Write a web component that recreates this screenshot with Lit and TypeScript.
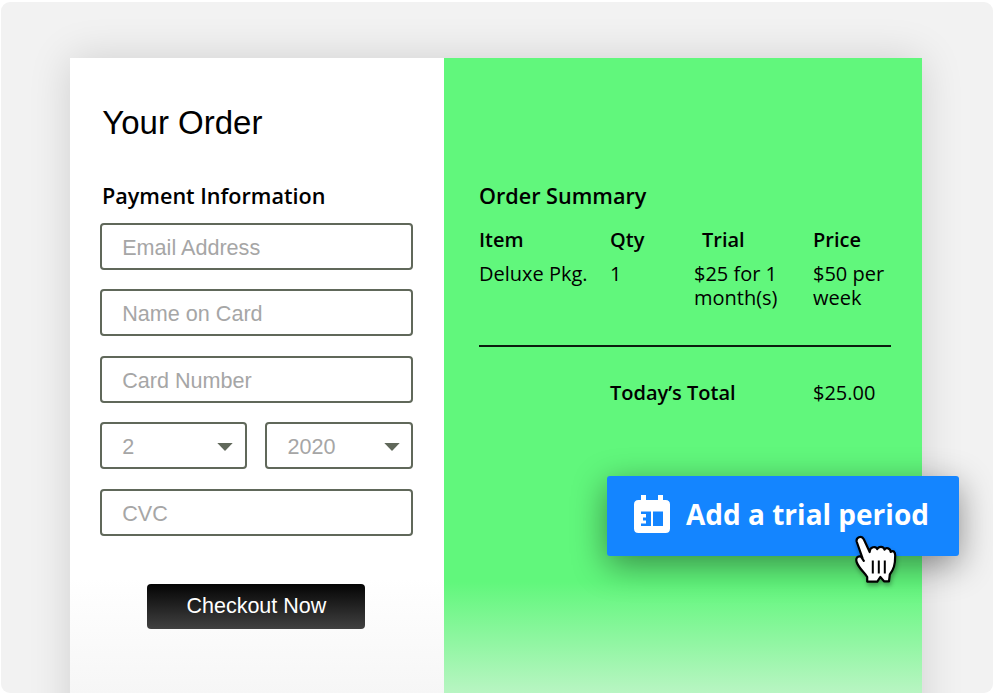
import { LitElement, html, css } from "lit";
import { customElement, property } from "lit/decorators.js";

@customElement("order-field")
class OrderField extends LitElement {
  @property() label = "";
  @property({ type: Boolean }) select = false;

  static styles = css`
    :host {
      display: flex;
      align-items: center;
      justify-content: space-between;
      flex: 1;
      box-sizing: border-box;
      height: 47px;
      padding: 3px 11px 0 20.5px;
      border: 2px solid #60685a;
      border-radius: 4px;
      font: 21.6px/26px "Liberation Sans", Arial, sans-serif;
      color: #a6a6a6;
      background: #fff;
    }
    .arrow {
      display: block;
      width: 16px;
      height: 8px;
      margin-top: -1px;
    }
  `;

  render() {
    return html`<span>${this.label}</span>
      ${this.select
        ? html`<svg class="arrow" viewBox="0 0 16 8"><path d="M0.3 0H15.7L8 8Z" fill="#60685a" /></svg>`
        : null}`;
  }
}

@customElement("app-root")
class AppRoot extends LitElement {
  static styles = css`
    :host {
      display: block;
      width: 994px;
      height: 694px;
      box-sizing: border-box;
      padding: 2px 1px 1px;
      overflow: hidden;
      background: #fff;
      font-family: "Open Sans", "Noto Sans", sans-serif;
      color: #000;
    }
    .stage {
      position: relative;
      height: 691px;
      box-sizing: border-box;
      padding: 56px 71px 0 69px;
      border-radius: 9px;
      background: #f2f2f2;
      overflow: hidden;
    }
    .card {
      display: grid;
      grid-template-columns: 374.4px 1fr;
      height: 700px;
      box-shadow: 0 0 40px rgba(0, 0, 0, 0.14);
    }
    .payment {
      box-sizing: border-box;
      padding: 45px 31.7px 0 29.7px;
      background: linear-gradient(#fff 520px, #f6f6f6 636px);
    }
    .summary {
      box-sizing: border-box;
      padding: 123px 31px 0 34.6px;
      background: linear-gradient(#61f77c 524px, #b9f5c3 636px);
    }
    .title {
      margin: 0 0 0 2.5px;
      font: 400 33px/40px "Liberation Sans", Arial, sans-serif;
    }
    .heading {
      margin: 0;
      font-size: 21.6px;
      line-height: 30px;
      font-weight: 600;
    }
    .payment .heading {
      margin: 38px 0 11.7px 2.3px;
    }
    .fields {
      display: flex;
      flex-direction: column;
      gap: 19.6px;
    }
    .fields order-field {
      flex: none;
    }
    .pair {
      display: flex;
      gap: 18px;
    }
    .fields .pair order-field {
      flex: 1;
    }
    .fields .pair order-field:first-child {
      flex: none;
      width: 147.4px;
      padding-right: 12.5px;
    }
    .checkout {
      display: block;
      width: 218px;
      height: 45px;
      margin: 47.6px 0 0 47.7px;
      padding: 0;
      border: 0;
      border-radius: 4px;
      background: linear-gradient(#040404, #414141);
      color: #fff;
      font: 21.5px/44px "Liberation Sans", Arial, sans-serif;
    }
    .grid {
      display: grid;
      grid-template-columns: 131px 84px 119px 1fr;
      margin-top: 17px;
      font-size: 20px;
      line-height: 24px;
      white-space: nowrap;
    }
    .head {
      font-weight: 600;
      margin-bottom: 10px;
    }
    .indent {
      padding-left: 8px;
    }
    .rule {
      height: 2px;
      margin: 35px 0 34px;
      background: #0b1c0e;
    }
    .total {
      margin-top: 0;
    }
    .name {
      grid-column: 2 / 4;
      font-weight: 600;
    }
    .callout {
      position: absolute;
      left: 606px;
      top: 474px;
      box-sizing: border-box;
      width: 352px;
      height: 80px;
      display: flex;
      align-items: center;
      gap: 16px;
      padding: 0 0 4px 27px;
      border-radius: 3px;
      background: #1485ff;
      box-shadow: 0 9px 34px rgba(0, 0, 0, 0.43);
      color: #fff;
      font-size: 28px;
      line-height: 38px;
      font-weight: 700;
      white-space: nowrap;
    }
    .calendar {
      display: block;
      width: 36px;
      height: 38px;
    }
    .cursor {
      position: absolute;
      left: 853px;
      top: 532px;
      width: 46px;
      height: 52px;
      filter: drop-shadow(1px 3px 2px rgba(0, 0, 0, 0.3));
    }
  `;

  render() {
    return html`
      <div class="stage">
        <div class="card">
          <section class="payment">
            <h1 class="title">Your Order</h1>
            <h2 class="heading">Payment Information</h2>
            <div class="fields">
              <order-field label="Email Address"></order-field>
              <order-field label="Name on Card"></order-field>
              <order-field label="Card Number"></order-field>
              <div class="pair">
                <order-field label="2" select></order-field>
                <order-field label="2020" select></order-field>
              </div>
              <order-field label="CVC"></order-field>
            </div>
            <button class="checkout">Checkout Now</button>
          </section>
          <section class="summary">
            <h2 class="heading">Order Summary</h2>
            <div class="grid">
              <span class="head">Item</span><span class="head">Qty</span>
              <span class="head indent">Trial</span><span class="head">Price</span>
              <span>Deluxe Pkg.</span><span>1</span>
              <span>$25 for 1<br />month(s)</span><span>$50 per<br />week</span>
            </div>
            <div class="rule"></div>
            <div class="grid total">
              <span class="name">Today’s Total</span><span>$25.00</span>
            </div>
          </section>
        </div>
        <div class="callout">
          <svg class="calendar" viewBox="0 0 36 38">
            <path
              fill="#fff"
              fill-rule="evenodd"
              d="M7 0H12V5H24V0H29V5H31.5Q36 5 36 9.500V33.500Q36 38 31.500 38H4.500Q0 38 0 33.500V9.500Q0 5 4.500 5H7ZM7 16.500V19H12V22.500H9V25.500H12V28.500H7V31H17V16.500ZM19 16.500V31H29V16.500Z"
            />
          </svg>
          <span>Add a trial period</span>
        </div>
        <svg class="cursor" viewBox="0 0 46 52">
          <path
            d="M8.500 24.200L2.800 8C1.500 3.500 7.500 0.800 9.800 5.200L15.700 18C15.500 12.600 22 11.600 23.200 15.200C24.500 12 29.600 12 30.500 15.600C32 13.200 36.500 14 36.700 18C39 16 41.200 17.500 41.200 21.500C41.200 31 39.800 35 35.800 40.500L35 47.300H30L26.300 43L23.300 47.600H13.200V43C10.500 38.500 5 34.500 2.800 28.500C1.200 24 3.600 21.600 7 22.600L9.800 26.800"
            fill="#fff"
            stroke="#000"
            stroke-width="2.200"
            stroke-linejoin="round"
            stroke-linecap="round"
          />
          <path d="M18.800 26.500V39.500M24.800 26.500V39.500M30.800 26.500V39.500" stroke="#000" stroke-width="2" fill="none" />
        </svg>
      </div>
    `;
  }
}
